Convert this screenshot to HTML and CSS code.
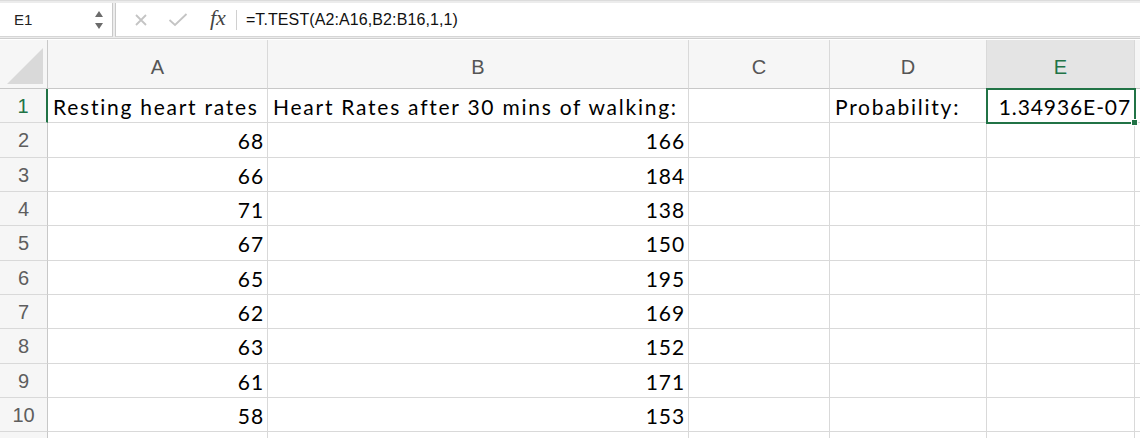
FILE: index.html
```html
<!DOCTYPE html>
<html lang="en">
<head>
    <meta charset="UTF-8">
    <title>T.TEST</title>
    <link rel="stylesheet" href="styles.css">
</head>
<body>
    <div id="toolbar">
        <div class="nameBox">
            <span class="cellRef">E1</span>
            <svg class="spinner" width="10" height="22" viewBox="0 0 10 22">
                <path d="M5 2 L9 8 L1 8 Z" fill="#6b6b6b"/>
                <path d="M1 14 L9 14 L5 20 Z" fill="#6b6b6b"/>
            </svg>
        </div>
        <div class="formulaBox">
            <svg class="tool" width="14" height="14" viewBox="0 0 14 14">
                <path d="M2 2 L12 12 M12 2 L2 12" stroke="#c4c4c4" stroke-width="1.8" fill="none"/>
            </svg>
            <svg class="tool" width="20" height="15" viewBox="0 0 20 15">
                <path d="M1.5 8 L7 13 L18.5 2" stroke="#c4c4c4" stroke-width="1.8" fill="none"/>
            </svg>
            <span class="fx">fx</span>
            <span class="sep"></span>
            <span class="formulaText">=T.TEST(A2:A16,B2:B16,1,1)</span>
        </div>
    </div>

    <div id="sheet">
        <div class="colHead corner"><span class="tri"></span></div>
        <div class="colHead">A</div>
        <div class="colHead">B</div>
        <div class="colHead">C</div>
        <div class="colHead">D</div>
        <div class="colHead active">E</div>
        <div class="colHead"></div>

        <div class="rowHead active">1</div>
        <div class="cell">Resting heart rates</div>
        <div class="cell">Heart Rates after 30 mins of walking:</div>
        <div class="cell"></div>
        <div class="cell">Probability:</div>
        <div class="cell num sel">1.34936E-07<span class="handle"></span></div>
        <div class="cell"></div>

        <div class="rowHead">2</div>
        <div class="cell num">68</div>
        <div class="cell num">166</div>
        <div class="cell"></div><div class="cell"></div><div class="cell"></div><div class="cell"></div>

        <div class="rowHead">3</div>
        <div class="cell num">66</div>
        <div class="cell num">184</div>
        <div class="cell"></div><div class="cell"></div><div class="cell"></div><div class="cell"></div>

        <div class="rowHead">4</div>
        <div class="cell num">71</div>
        <div class="cell num">138</div>
        <div class="cell"></div><div class="cell"></div><div class="cell"></div><div class="cell"></div>

        <div class="rowHead">5</div>
        <div class="cell num">67</div>
        <div class="cell num">150</div>
        <div class="cell"></div><div class="cell"></div><div class="cell"></div><div class="cell"></div>

        <div class="rowHead">6</div>
        <div class="cell num">65</div>
        <div class="cell num">195</div>
        <div class="cell"></div><div class="cell"></div><div class="cell"></div><div class="cell"></div>

        <div class="rowHead">7</div>
        <div class="cell num">62</div>
        <div class="cell num">169</div>
        <div class="cell"></div><div class="cell"></div><div class="cell"></div><div class="cell"></div>

        <div class="rowHead">8</div>
        <div class="cell num">63</div>
        <div class="cell num">152</div>
        <div class="cell"></div><div class="cell"></div><div class="cell"></div><div class="cell"></div>

        <div class="rowHead">9</div>
        <div class="cell num">61</div>
        <div class="cell num">171</div>
        <div class="cell"></div><div class="cell"></div><div class="cell"></div><div class="cell"></div>

        <div class="rowHead">10</div>
        <div class="cell num">58</div>
        <div class="cell num">153</div>
        <div class="cell"></div><div class="cell"></div><div class="cell"></div><div class="cell"></div>

        <div class="rowHead"></div>
        <div class="cell"></div><div class="cell"></div><div class="cell"></div><div class="cell"></div><div class="cell"></div><div class="cell"></div>
    </div>
</body>
</html>
```

FILE: styles.css
```css
* {
    margin: 0px;
    padding: 0px;
    box-sizing: border-box;
}
body, html {
    height: 100%;
    overflow: hidden;
    background-color: #fff;
}
#toolbar {
    display: flex;
    height: 39px;
    padding-top: 2px;
    background-color: #ececec;
    border-top: 1px solid #dcdcdc;
    border-bottom: 1px solid #cfcfcf;
    font-family: "Liberation Sans", Arial, sans-serif;
}
.nameBox {
    display: flex;
    align-items: center;
    justify-content: space-between;
    width: 113px;
    height: 34px;
    padding: 0 8px 0 14px;
    background-color: #fff;
    border-right: 1px solid #c9c9c9;
    border-bottom: 1px solid #d6d6d6;
}
.cellRef {
    font-size: 15px;
    color: #222;
}
.formulaBox {
    flex: 1;
    display: flex;
    align-items: center;
    height: 34px;
    margin-left: 2px;
    padding-left: 18px;
    background-color: #fff;
    border-left: 1px solid #c9c9c9;
    border-bottom: 1px solid #d6d6d6;
}
.tool {
    margin-right: 20px;
}
.fx {
    font-family: "Liberation Serif", "DejaVu Serif", serif;
    font-style: italic;
    font-size: 22px;
    color: #444;
    margin: -4px 0 0 2px;
}
.sep {
    width: 1px;
    height: 20px;
    background-color: #d0d0d0;
    margin: 0 9px 0 10px;
}
.formulaText {
    font-size: 16px;
    letter-spacing: 0.1px;
    color: #111;
}
#sheet {
    display: grid;
    grid-template-columns: 48px 220px 421px 141px 157px 148px 1fr;
    grid-template-rows: 49px repeat(11, 34.33px);
    margin-top: 1px;
}
.colHead {
    display: flex;
    align-items: center;
    justify-content: center;
    padding-top: 6px;
    background-color: #f6f6f6;
    border-right: 1px solid #d9d9d9;
    border-bottom: 1px solid #c8c8c8;
    font-family: "Liberation Sans", Arial, sans-serif;
    font-size: 20px;
    color: #555;
}
.colHead.active {
    background-color: #e4e4e4;
    color: #217346;
}
.corner {
    position: relative;
    border-right: 1px solid #c8c8c8;
}
.tri {
    position: absolute;
    right: 4px;
    bottom: 4px;
    width: 0;
    height: 0;
    border-left: 36px solid transparent;
    border-bottom: 36px solid #d9d9d9;
}
.rowHead {
    display: flex;
    align-items: center;
    justify-content: center;
    padding-top: 2px;
    background-color: #f6f6f6;
    border-right: 1px solid #c8c8c8;
    border-bottom: 1px solid #d9d9d9;
    font-family: "Liberation Sans", Arial, sans-serif;
    font-size: 20px;
    color: #5e5e5e;
}
.rowHead.active {
    color: #217346;
    border-right: 2px solid #217346;
}
.cell {
    display: flex;
    align-items: center;
    padding: 2px 4px 0 5px;
    border-right: 1px solid #d9d9d9;
    border-bottom: 1px solid #d9d9d9;
    font-family: Lato, "Open Sans", sans-serif;
    font-size: 21px;
    letter-spacing: 1.75px;
    color: #000;
    white-space: nowrap;
}
.num {
    justify-content: flex-end;
    letter-spacing: 0.9px;
    padding-right: 3px;
}
.sel {
    position: relative;
    outline: 2px solid #217346;
    outline-offset: -1px;
}
.handle {
    position: absolute;
    right: -4px;
    bottom: -4px;
    width: 7px;
    height: 7px;
    background-color: #217346;
    border: 1px solid #fff;
}
```
